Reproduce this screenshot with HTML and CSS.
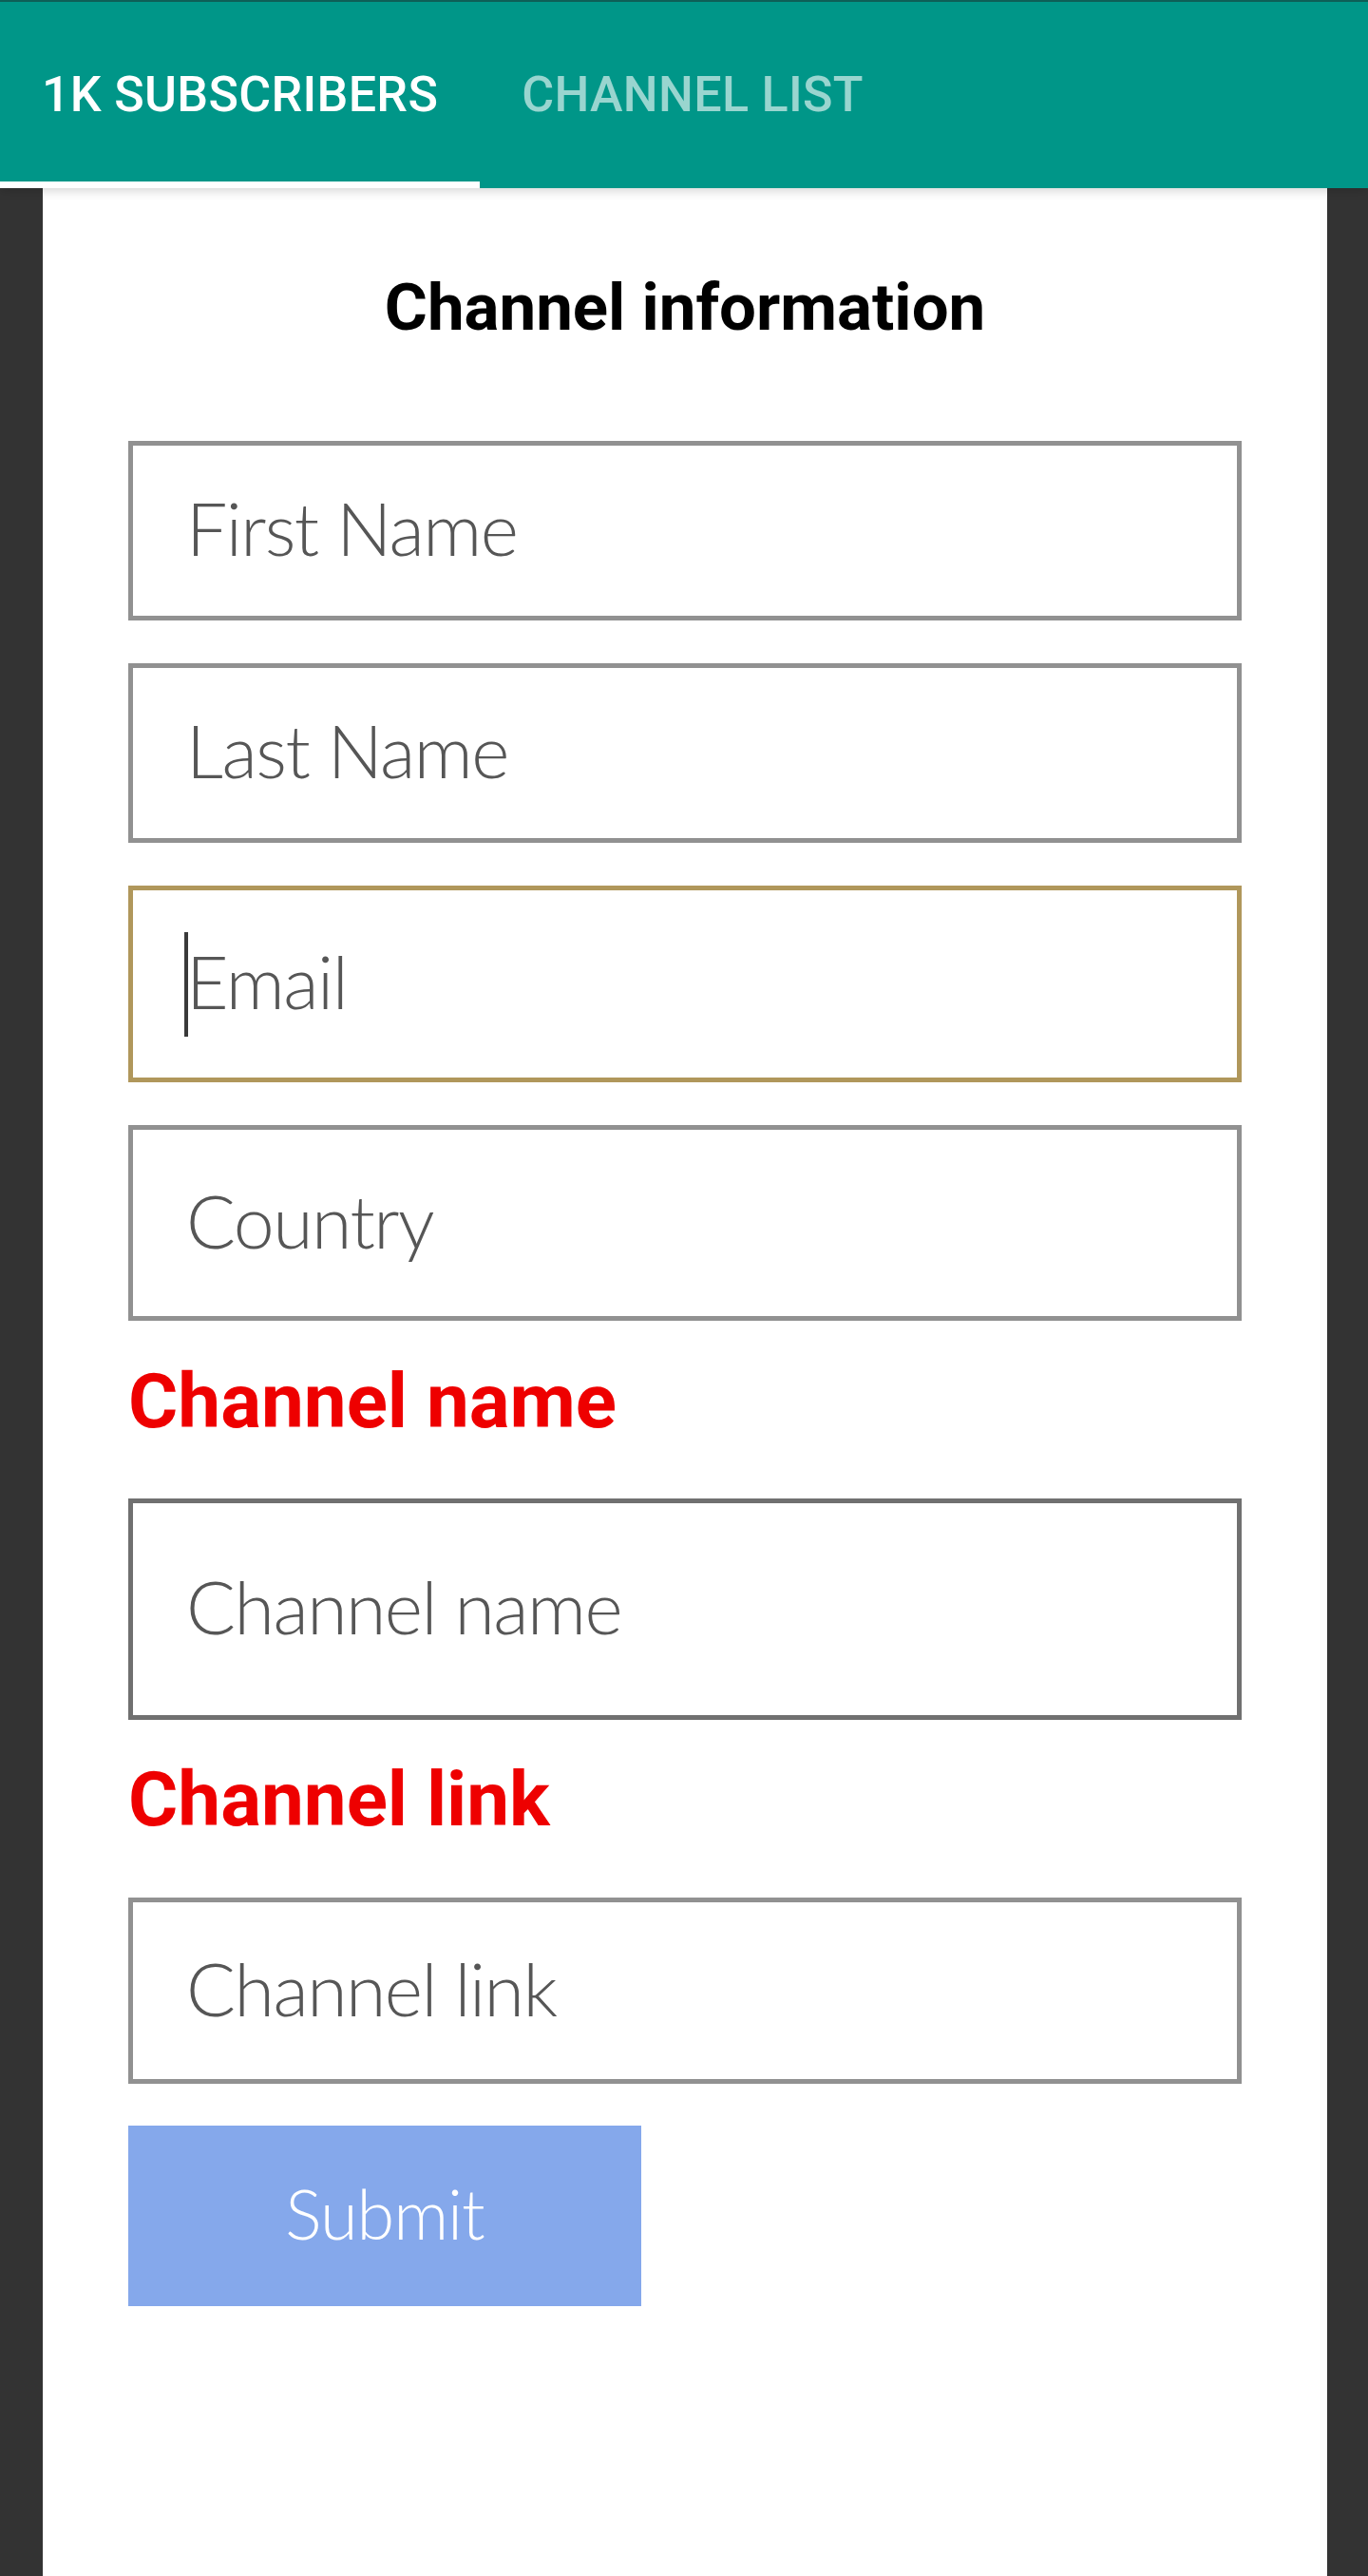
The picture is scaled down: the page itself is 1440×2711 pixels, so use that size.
FILE: index.html
```html
<!DOCTYPE html>
<html lang="en">
<head>
<meta charset="utf-8">
<title>Channel information</title>
<link rel="stylesheet" href="styles.css">
</head>
<body>
<div class="app">
  <header class="tabs">
    <div class="tab active">1K SUBSCRIBERS</div>
    <div class="tab">CHANNEL LIST</div>
  </header>
  <main class="page">
    <section class="card">
      <h1 class="title">Channel information</h1>
      <div class="field field-short first"><span class="ph">First Name</span></div>
      <div class="field field-short gap"><span class="ph">Last Name</span></div>
      <div class="field field-focus gap"><span class="caret"></span><span class="ph">Email</span></div>
      <div class="field field-mid gap"><span class="ph">Country</span></div>
      <h2 class="label label-name">Channel name</h2>
      <div class="field field-tall field-dark after-label"><span class="ph">Channel name</span></div>
      <h2 class="label label-link">Channel link</h2>
      <div class="field field-link after-label2"><span class="ph">Channel link</span></div>
      <button class="submit" type="button">Submit</button>
    </section>
  </main>
</div>
</body>
</html>
```
FILE: styles.css
```css
html, body {
  margin: 0;
  padding: 0;
}
body {
  background: #333333;
  font-family: Roboto, "Liberation Sans", Arial, sans-serif;
}
.app {
  min-height: 2711px;
  display: flex;
  flex-direction: column;
}
.tabs {
  height: 198px;
  box-sizing: border-box;
  background: #009688;
  border-top: 2px solid #0e5f57;
  display: flex;
  position: relative;
  z-index: 2;
  box-shadow: 0 3px 10px rgba(0, 0, 0, 0.16);
}
.tab {
  position: relative;
  display: flex;
  align-items: center;
  padding: 0 44px 2px;
  font-size: 52px;
  font-weight: 500;
  letter-spacing: 0.3px;
  color: rgba(255, 255, 255, 0.6);
}
.tab.active {
  color: #ffffff;
}
.tab.active::after {
  content: "";
  position: absolute;
  left: 0;
  right: 0;
  bottom: 0;
  height: 7px;
  background: #ffffff;
}
.page {
  flex: 1;
  display: flex;
  padding: 0 43px 0 45px;
}
.card {
  flex: 1;
  background: #ffffff;
  box-sizing: border-box;
  padding: 91px 90px 0;
  display: flex;
  flex-direction: column;
}
.title {
  margin: 0;
  font-size: 69px;
  line-height: 69px;
  font-weight: 700;
  color: #000000;
  text-align: center;
}
.field {
  box-sizing: border-box;
  border: 5px solid #919191;
  display: flex;
  align-items: center;
  padding: 0 0 6px 56px;
  font-family: Lato, "Open Sans", sans-serif;
  font-weight: 300;
  font-size: 77px;
  letter-spacing: -1.5px;
  line-height: 1;
  color: #565656;
}
.field-short {
  height: 189px;
}
.field-focus {
  height: 207px;
  border-color: #b0975b;
}
.field-mid {
  height: 206px;
}
.field-tall {
  height: 233px;
}
.field-dark {
  border-color: #707070;
}
.field-link {
  height: 196px;
}
.first {
  margin-top: 106px;
}
.gap {
  margin-top: 45px;
}
.caret {
  display: inline-block;
  width: 4px;
  height: 110px;
  background: #3a3a3a;
  margin-left: -2px;
  margin-right: -2px;
  margin-top: 6px;
}
.label {
  margin: 0;
  font-size: 80px;
  line-height: 80px;
  font-weight: 700;
  color: #ee0000;
}
.label-name {
  margin-top: 45px;
}
.label-link {
  margin-top: 44px;
}
.after-label {
  margin-top: 62px;
}
.after-label2 {
  margin-top: 63px;
}
.submit {
  align-self: flex-start;
  margin-top: 44px;
  width: 540px;
  height: 190px;
  border: 0;
  padding: 0 0 6px;
  background: #85a8eb;
  color: #ffffff;
  font-family: Lato, "Open Sans", sans-serif;
  font-weight: 300;
  font-size: 72px;
  letter-spacing: -1px;
}
```
